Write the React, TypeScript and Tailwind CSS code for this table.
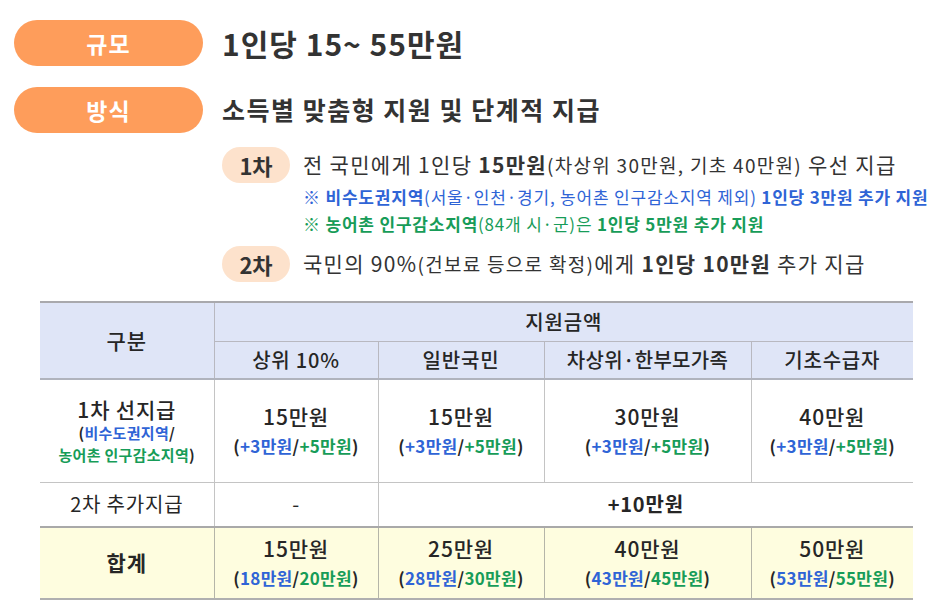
import React from 'react';

const B = ({ children }: { children: React.ReactNode }) => (
  <span className="text-[#2f64d6]">{children}</span>
);
const G = ({ children }: { children: React.ReactNode }) => (
  <span className="text-[#179c58]">{children}</span>
);

const Amount = ({ main, a, b }: { main: string; a: string; b: string }) => (
  <div className="flex flex-col items-center">
    <span className="text-[21px] leading-[29px] tracking-[0.8px] font-medium">{main}</span>
    <span className="text-[17px] leading-[29px] font-semibold tracking-[0.3px]">
      (<B>{a}</B>/<G>{b}</G>)
    </span>
  </div>
);

const App = () => {
  return (
    <div
      className="w-[942px] h-[612px] bg-white text-[#333] overflow-hidden"
      style={{ fontFamily: '"Noto Sans CJK KR", "Noto Sans", sans-serif' }}
    >
      {/* 규모 */}
      <div className="flex items-center pl-[14px] pt-[20px]">
        <div className="w-[189px] h-[46px] rounded-full bg-[#fe9d5b] flex items-center justify-center text-white text-[23px] font-bold tracking-[1px]">
          규모
        </div>
        <div className="ml-[19px] text-[30px] font-bold tracking-[1px]">1인당 15~ 55만원</div>
      </div>

      {/* 방식 */}
      <div className="flex items-center pl-[14px] mt-[21px]">
        <div className="w-[189px] h-[46px] rounded-full bg-[#fe9d5b] flex items-center justify-center text-white text-[23px] font-bold tracking-[1px]">
          방식
        </div>
        <div className="ml-[19px] text-[25px] font-bold tracking-[1.5px]">소득별 맞춤형 지원 및 단계적 지급</div>
      </div>

      <div className="pl-[222px] mt-[14px]">
        <div className="flex items-center">
          <div className="w-[68px] h-[36px] rounded-full bg-[#fde2cc] flex items-center justify-center text-[22px] font-bold">
            1차
          </div>
          <div className="ml-[13px] text-[21px] tracking-[1.3px]">
            전 국민에게 1인당 <b>15만원</b>
            <span className="text-[19px]">(차상위 30만원, 기초 40만원)</span> 우선 지급
          </div>
        </div>
        <div className="ml-[81px] text-[17px] leading-[27px] text-[#2f64d6] tracking-[0.8px]">
          <b>※ 비수도권지역</b>(서울·인천·경기, 농어촌 인구감소지역 제외) <b>1인당 3만원 추가 지원</b>
        </div>
        <div className="ml-[81px] text-[17px] leading-[27px] text-[#179c58] tracking-[0.8px]">
          <b>※ 농어촌 인구감소지역</b>(84개 시·군)은 <b>1인당 5만원 추가 지원</b>
        </div>
        <div className="flex items-center mt-[9px]">
          <div className="w-[68px] h-[36px] rounded-full bg-[#fde2cc] flex items-center justify-center text-[22px] font-bold">
            2차
          </div>
          <div className="ml-[13px] text-[21px] tracking-[1.3px]">
            국민의 90%<span className="text-[19px]">(건보료 등으로 확정)</span>에게 <b>1인당 10만원</b> 추가 지급
          </div>
        </div>
      </div>

      {/* 표 */}
      <table className="ml-[40px] mt-[19px] w-[873px] border-collapse table-fixed text-center text-[#262626] border-t-2 border-t-[#a9a9ad] border-b-2 border-b-[#b0b0b0]">
        <colgroup>
          <col className="w-[174px]" />
          <col className="w-[164px]" />
          <col className="w-[166px]" />
          <col className="w-[207px]" />
          <col className="w-[162px]" />
        </colgroup>
        <tbody>
          <tr className="h-[39px] bg-[#dfe5f7]">
            <td rowSpan={2} className="text-[21px] tracking-[1px] font-medium border-r border-[#b8b8c0] border-b-2 border-b-[#b0b3bd]">
              구분
            </td>
            <td colSpan={4} className="text-[20px] tracking-[0.8px] font-medium border-b border-[#b8b8c0]">
              지원금액
            </td>
          </tr>
          <tr className="h-[38px] bg-[#dfe5f7] text-[20px] tracking-[0.8px] font-medium">
            <td className="border-r border-[#b8b8c0] border-b-2 border-b-[#b0b3bd]">상위 10%</td>
            <td className="border-r border-[#b8b8c0] border-b-2 border-b-[#b0b3bd]">일반국민</td>
            <td className="border-r border-[#b8b8c0] border-b-2 border-b-[#b0b3bd] tracking-[0.3px]">차상위·한부모가족</td>
            <td className="border-b-2 border-b-[#b0b3bd]">기초수급자</td>
          </tr>
          <tr className="h-[103px]">
            <td className="border-r border-b border-[#c4c4c4]">
              <div className="flex flex-col items-center">
                <span className="text-[21px] leading-[26px] tracking-[0.8px] font-medium">1차 선지급</span>
                <span className="text-[15px] leading-[22px] font-semibold tracking-[0.3px]">
                  (<B>비수도권지역</B>/
                </span>
                <span className="text-[15px] leading-[22px] font-semibold tracking-[0.3px]">
                  <G>농어촌 인구감소지역</G>)
                </span>
              </div>
            </td>
            <td className="border-r border-b border-[#c4c4c4]">
              <Amount main="15만원" a="+3만원" b="+5만원" />
            </td>
            <td className="border-r border-b border-[#c4c4c4]">
              <Amount main="15만원" a="+3만원" b="+5만원" />
            </td>
            <td className="border-r border-b border-[#c4c4c4]">
              <Amount main="30만원" a="+3만원" b="+5만원" />
            </td>
            <td className="border-b border-[#c4c4c4]">
              <Amount main="40만원" a="+3만원" b="+5만원" />
            </td>
          </tr>
          <tr className="h-[45px] text-[20px] tracking-[0.8px]">
            <td className="border-r border-b-2 border-[#c4c4c4] border-b-[#a9a9a9]">2차 추가지급</td>
            <td className="border-r border-b-2 border-[#c4c4c4] border-b-[#a9a9a9]">-</td>
            <td colSpan={3} className="border-b-2 border-b-[#a9a9a9] font-semibold">
              +10만원
            </td>
          </tr>
          <tr className="h-[72px] bg-[#fefddf]">
            <td className="border-r border-[#b5b5a8] text-[21px] tracking-[1px] font-semibold">합계</td>
            <td className="border-r border-[#b5b5a8]">
              <Amount main="15만원" a="18만원" b="20만원" />
            </td>
            <td className="border-r border-[#b5b5a8]">
              <Amount main="25만원" a="28만원" b="30만원" />
            </td>
            <td className="border-r border-[#b5b5a8]">
              <Amount main="40만원" a="43만원" b="45만원" />
            </td>
            <td>
              <Amount main="50만원" a="53만원" b="55만원" />
            </td>
          </tr>
        </tbody>
      </table>
    </div>
  );
};

export default App;
